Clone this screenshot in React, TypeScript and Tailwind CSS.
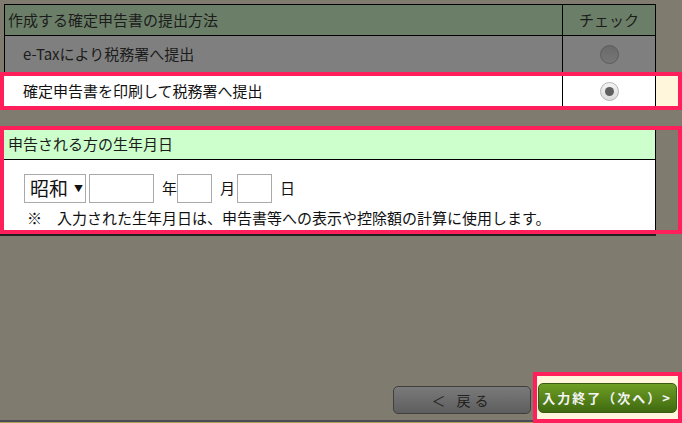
const font = { fontFamily: '"Noto Sans CJK JP", "Noto Sans", sans-serif' };

function Radio({ checked }: { checked?: boolean }) {
  if (checked) {
    return (
      <span className="flex h-[19px] w-[19px] items-center justify-center rounded-full border border-[#b5b5b5] bg-gradient-to-b from-[#f4f4f4] to-[#dcdcdc]">
        <span className="h-[9px] w-[9px] rounded-full bg-[#5f5f5f]" />
      </span>
    );
  }
  return <span className="h-[19px] w-[19px] rounded-full border border-[#5c5c5c] bg-gradient-to-b from-[#6a6a6a] to-[#767676]" />;
}

export default function App() {
  return (
    <div
      className="flex h-[423px] w-[682px] flex-col overflow-hidden bg-[#7f7b6e] pt-[4px] text-[15px] text-[#1c1c1c]"
      style={font}
    >
      {/* submission method */}
      <div className="ml-[4px] flex h-[32px] w-[652px] border border-black bg-[#6b7f68]">
        <div className="flex w-[558px] items-center border-r border-black pl-[3px]">作成する確定申告書の提出方法</div>
        <div className="flex flex-1 items-center justify-center">チェック</div>
      </div>
      <div className="ml-[4px] flex h-[36px] w-[652px] border-x border-black bg-[#7f7f7f]">
        <div className="flex w-[558px] items-center border-r border-black pl-[18px]">e-Taxにより税務署へ提出</div>
        <div className="flex flex-1 items-center justify-center">
          <Radio />
        </div>
      </div>
      <div className="flex h-[38px] w-[682px] border-4 border-[#ff1f5a]">
        <div className="flex w-[652px] border-r border-black bg-white">
          <div className="flex w-[559px] items-center border-r border-black pl-[19px] text-[#111]">確定申告書を印刷して税務署へ提出</div>
          <div className="flex flex-1 items-center justify-center">
            <Radio checked />
          </div>
        </div>
        <div className="flex-1 bg-[#fff6dc]" />
      </div>

      {/* birth date */}
      <div className="mt-[16px] flex h-[108px] w-[682px] border-4 border-[#ff1f5a]">
        <div className="flex w-[652px] flex-col border-r border-black">
          <div className="flex h-[30px] items-center border-b border-black bg-[#ccffcc] pl-[4px]">申告される方の生年月日</div>
          <div className="flex flex-1 flex-col bg-white pl-[20px] pt-[14px] text-[#111]">
            <div className="flex h-[29px] items-center">
              <div className="flex h-[29px] w-[62px] items-center border border-[#a9a9a9] pl-[5px] text-[19px]">
                昭和<span className="ml-[6px] text-[9px]">▼</span>
              </div>
              <div className="ml-[3px] h-[29px] w-[65px] border border-[#a9a9a9]" />
              <span className="ml-[8px] w-[15px]">年</span>
              <div className="h-[29px] w-[35px] border border-[#a9a9a9]" />
              <span className="ml-[8px] w-[17px]">月</span>
              <div className="h-[29px] w-[35px] border border-[#a9a9a9]" />
              <span className="ml-[8px]">日</span>
            </div>
            <div className="mt-[6px] pl-[3px] leading-[18px]">※　入力された生年月日は、申告書等への表示や控除額の計算に使用します。</div>
          </div>
        </div>
        <div className="flex-1" />
      </div>
      <div className="h-[2px] w-[656px] bg-[#222]" />

      <div className="flex-1" />

      {/* footer buttons */}
      <div className="flex h-[51px]">
        <div className="flex flex-1 flex-col">
          <div className="mt-[14px] ml-[393px] flex h-[28px] w-[138px] items-center justify-center rounded-[5px] border border-[#3f3f3f] bg-gradient-to-b from-[#7a7a7a] to-[#5e5e5e] text-[14px] tracking-[4px] text-[#222]">
            ＜ 戻る
          </div>
          <div className="flex-1" />
          <div className="h-[2px] bg-[#4c4a58]" />
          <div className="h-[1px] bg-[#a9a255]" />
        </div>
        <div className="flex w-[149px] items-center justify-center border-4 border-[#ff1f5a] bg-[#fff6dc] pr-[1px]">
          <div className="mt-[1px] flex h-[30px] w-[139px] items-center justify-center rounded-[5px] border border-[#3a5c12] bg-gradient-to-b from-[#6f9e25] to-[#3f6a10] text-[13px] font-bold tracking-[2px] text-[#f4f4f4]">
            入力終了（次へ）&gt;
          </div>
        </div>
      </div>
    </div>
  );
}
